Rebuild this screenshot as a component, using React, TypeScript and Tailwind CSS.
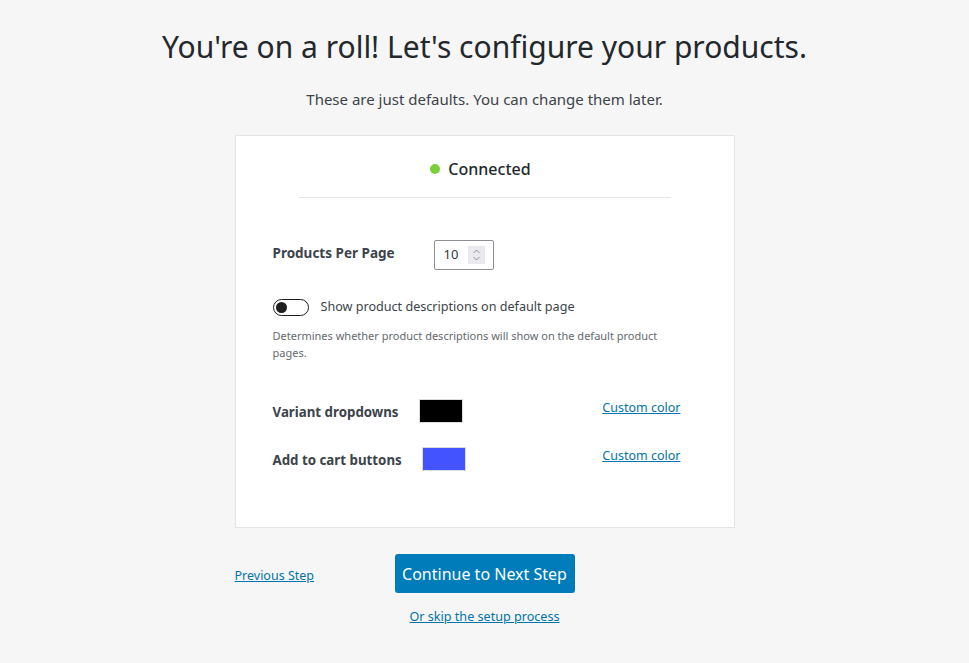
import { useState } from "react";

const font = { fontFamily: '"Noto Sans", "Open Sans", sans-serif' };

function Swatch({ color }: { color: string }) {
  return <div className={`w-[44px] h-[24px] border border-[#dcdcde] ${color}`} />;
}

function ColorRow({ label, color }: { label: string; color: string }) {
  return (
    <div className="flex items-center">
      <span className="text-[13.3px] font-bold text-[#3c434a] mr-[20px] mt-[4px]">{label}</span>
      <Swatch color={color} />
      <a href="#" className="ml-auto text-[12.5px] text-[#0073aa] underline self-start">
        Custom color
      </a>
    </div>
  );
}

export default function App() {
  const [showDesc, setShowDesc] = useState(false);

  return (
    <div className="min-h-screen bg-[#f6f6f6] flex flex-col items-center text-[#23282d]" style={font}>
      {/* Heading */}
      <h1 className="mt-[23px] text-[30px] leading-[48px] text-[#23282d]">
        You're on a roll! Let's configure your products.
      </h1>
      <p className="mt-[18px] text-[15px] leading-[20px] text-[#3c434a]">
        These are just defaults. You can change them later.
      </p>

      {/* Card */}
      <div className="mt-[26px] w-[500px] h-[393px] bg-white border border-[#e2e4e7] px-[37px] pt-[21px]">
        <div className="flex items-center justify-center gap-[8px] pr-[8px]">
          <span className="w-[10px] h-[10px] rounded-full bg-[#7ad03a]" />
          <span className="text-[16px] font-medium leading-[24px] text-[#23282d]">Connected</span>
        </div>
        <div className="mx-[26px] mt-[16px] border-t border-[#e2e4e7]" />

        {/* Products per page */}
        <div className="flex items-center mt-[42px]">
          <span className="w-[161px] text-[13.5px] font-bold text-[#3c434a] -mt-[3px]">Products Per Page</span>
          <div className="w-[60px] h-[30px] border border-[#8c8f94] rounded-[2px] flex items-center pl-[9px] pr-[8px]">
            <span className="text-[13px] text-[#32373c]">10</span>
            <div className="ml-auto w-[17px] h-[18px] bg-[#e9e9ee] flex flex-col items-center justify-center">
              <svg width="9" height="14" viewBox="0 0 9 14" fill="none" stroke="#8c8f94" strokeWidth="1">
                <path d="M1.5 5 L4.5 2 L7.5 5" />
                <path d="M1.5 9 L4.5 12 L7.5 9" />
              </svg>
            </div>
          </div>
        </div>

        {/* Toggle */}
        <div className="flex items-center mt-[28px]">
          <button
            onClick={() => setShowDesc(!showDesc)}
            className={`w-[36px] h-[17px] rounded-full border-[1.5px] border-[#1e1e1e] flex items-center px-[2px] ${
              showDesc ? "justify-end bg-[#1e1e1e]" : "justify-start bg-white"
            }`}
          >
            <span className={`w-[11px] h-[11px] rounded-full ${showDesc ? "bg-white" : "bg-[#1e1e1e]"}`} />
          </button>
          <span className="ml-[12px] text-[12.6px] text-[#3c434a]">Show product descriptions on default page</span>
        </div>
        <p className="mt-[10px] text-[11px] leading-[17px] text-[#646970] pr-[20px]">
          Determines whether product descriptions will show on the default product pages.
        </p>

        {/* Colors */}
        <div className="mt-[38px] flex flex-col gap-[24px] pr-[16px]">
          <ColorRow label="Variant dropdowns" color="bg-black" />
          <ColorRow label="Add to cart buttons" color="bg-[#4353ff]" />
        </div>
      </div>

      {/* Footer actions */}
      <div className="w-[500px] mt-[26px] flex items-center">
        <div className="w-[160px]">
          <a href="#" className="text-[12.5px] text-[#0073aa] underline">Previous Step</a>
        </div>
        <button className="w-[180px] h-[39px] rounded-[3px] bg-[#007cba] text-white text-[16px]">
          Continue to Next Step
        </button>
      </div>
      <a href="#" className="mt-[15px] text-[12.6px] text-[#0073aa] underline">Or skip the setup process</a>
    </div>
  );
}
